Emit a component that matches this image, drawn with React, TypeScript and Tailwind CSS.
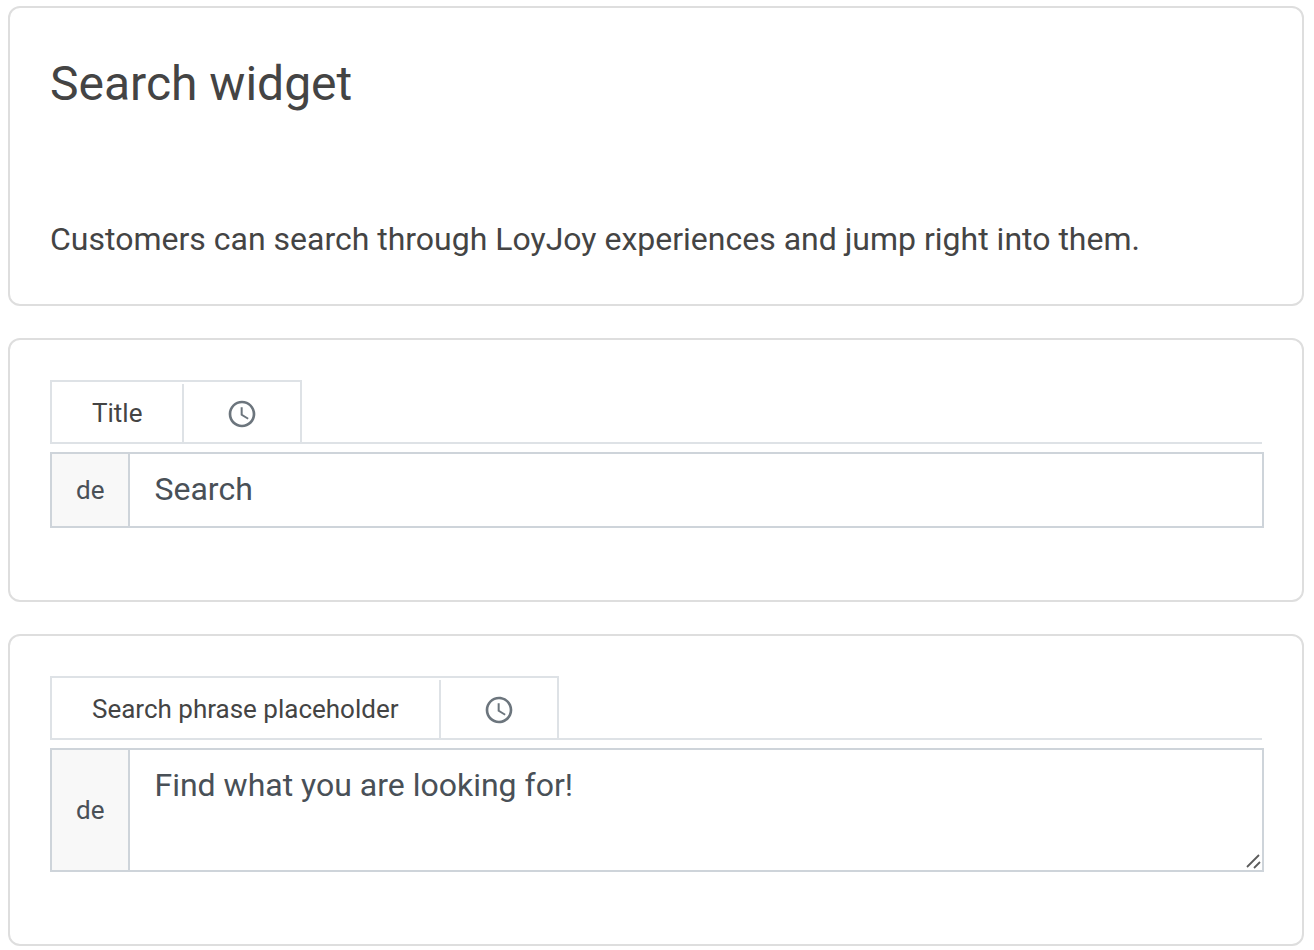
import { useId, useState } from "react";
import type { ReactNode } from "react";
import { MdOutlineSchedule } from "react-icons/md";

function Card({ children }: { children: ReactNode }) {
  return (
    <section className="rounded-xl border-2 border-[#dedede] bg-white pr-[38px] pl-10">
      {children}
    </section>
  );
}

function FieldTabs({ label, htmlFor }: { label: string; htmlFor: string }) {
  return (
    <div className="mr-0.5 flex h-16 border-b-2 border-[#dee2e6]">
      <div className="flex border-2 border-b-0 border-[#dee2e6]">
        <label htmlFor={htmlFor} className="px-10 pt-2 text-[26px] leading-[46px] text-[#444]">
          {label}
        </label>
        <div className="mt-0.5 w-0.5 bg-[#dee2e6]" />
        <button
          type="button"
          aria-label={`Schedule ${label}`}
          className="flex items-center px-[42px] pt-1 text-[#6c757d]"
        >
          <MdOutlineSchedule className="size-8" />
        </button>
      </div>
    </div>
  );
}

function Prefix() {
  return (
    <span className="flex items-center border-r-2 border-[#ced4da] bg-[#f8f8f8] px-6 text-[26px] leading-10 text-[#495057]">
      de
    </span>
  );
}

function Field({
  label,
  initial,
  multiline = false,
}: {
  label: string;
  initial: string;
  multiline?: boolean;
}) {
  const id = useId();
  const [value, setValue] = useState(initial);
  return (
    <Card>
      <div className="pt-10 pb-[72px]">
        <FieldTabs label={label} htmlFor={id} />
        <div className="relative mt-2 flex border-2 border-[#ced4da]">
          <Prefix />
          {multiline ? (
            <>
              <textarea
                id={id}
                value={value}
                onChange={(e) => setValue(e.target.value)}
                className="h-[120px] min-w-0 flex-1 resize-none px-6 py-3 text-[32px] leading-[46px] text-[#495057] outline-none"
              />
              <svg
                aria-hidden="true"
                viewBox="0 0 16 16"
                className="pointer-events-none absolute right-0 bottom-0 size-4"
                fill="none"
                stroke="#5c5c5c"
                strokeWidth="1.8"
              >
                <path d="M1 13 13 1M8 14l6-6" />
              </svg>
            </>
          ) : (
            <input
              id={id}
              type="text"
              value={value}
              onChange={(e) => setValue(e.target.value)}
              className="h-[72px] min-w-0 flex-1 px-6 pb-0.5 text-[32px] leading-[46px] text-[#495057] outline-none"
            />
          )}
        </div>
      </div>
    </Card>
  );
}

export default function App() {
  return (
    <main className="flex flex-col gap-8 pt-1.5 pr-2.5 pb-1 pl-2 font-['Roboto','Liberation_Sans',sans-serif] text-[#444]">
      <Card>
        <div className="pt-12 pb-[42px]">
          <h1 className="text-[48px] leading-14">Search widget</h1>
          <p className="mt-26 text-[32px] leading-[46px]">
            Customers can search through LoyJoy experiences and jump right into them.
          </p>
        </div>
      </Card>
      <Field label="Title" initial="Search" />
      <Field label="Search phrase placeholder" initial="Find what you are looking for!" multiline />
    </main>
  );
}
